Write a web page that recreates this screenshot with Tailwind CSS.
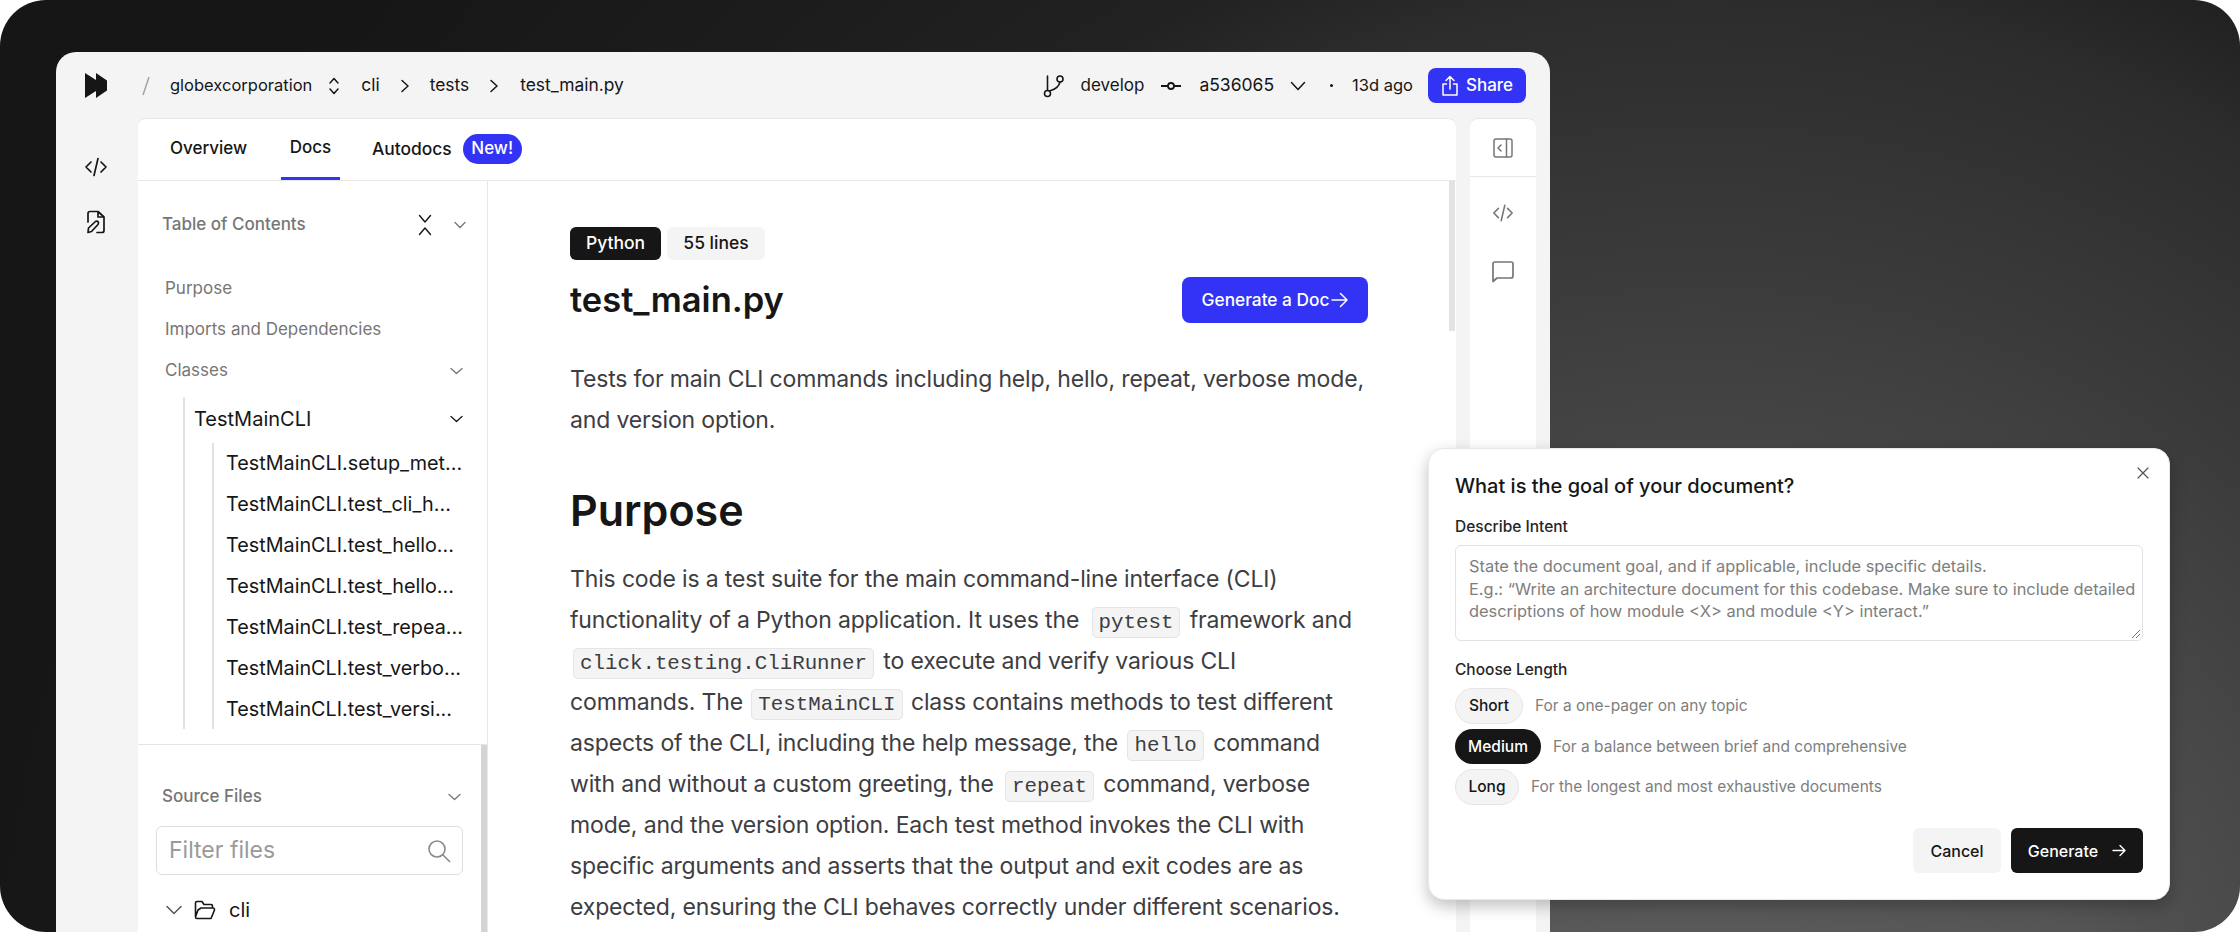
<!DOCTYPE html>
<html lang="en">
<head>
<meta charset="utf-8">
<title>Docs</title>
<script src="https://cdn.jsdelivr.net/npm/@tailwindcss/browser@4"></script>
</head>
<body class="bg-white font-['Inter',sans-serif] text-[#161616]">
<div class="relative w-[2240px] h-[932px] overflow-hidden rounded-[46px] bg-[radial-gradient(circle_at_1700px_1100px,#5c5c5c_0px,#555555_400px,#3c3c3c_810px,#2c2c2c_1100px,#222222_1200px,#1c1c1c_1420px,#161616_1750px)] pt-[52px] pl-[56px]">

  <!-- App window -->
  <div class="w-[1494px] h-[900px] rounded-t-[20px] bg-[#f4f4f4] flex flex-col overflow-hidden">
    <!-- Top bar -->
    <header class="h-[66px] shrink-0 flex items-center text-[17px] pl-[29px] pr-[24px] pt-[1px]">
      <svg class="w-[22px] h-[25px]" viewBox="0 0 22 25" fill="#161616"><path d="M0 0 11 7V0L22 7.500V17.500L11 25V18L0 25Z"/></svg>
      <svg class="ml-[34px] w-[10px] h-[20px]" viewBox="0 0 10 20" fill="none" stroke="#a3a3a3" stroke-width="1.500"><path d="M8 1 2 19"/></svg>
      <span class="ml-[19px] text-[16.500px]">globexcorporation</span>
      <svg class="ml-[16px] w-[12px] h-[20px]" viewBox="0 0 12 20" fill="none" stroke="#161616" stroke-width="1.500" stroke-linecap="round" stroke-linejoin="round"><path d="M2 7 6 2.500 10 7M2 13 6 17.500 10 13"/></svg>
      <span class="ml-[21px] text-[17.400px]">cli</span>
      <svg class="ml-[20px] w-[10px] h-[16px]" viewBox="0 0 10 16" fill="none" stroke="#161616" stroke-width="1.500" stroke-linecap="round" stroke-linejoin="round"><path d="M2 2.500 8 8 2 13.500"/></svg>
      <span class="ml-[20px] text-[17.400px]">tests</span>
      <svg class="ml-[20px] w-[10px] h-[16px]" viewBox="0 0 10 16" fill="none" stroke="#161616" stroke-width="1.500" stroke-linecap="round" stroke-linejoin="round"><path d="M2 2.500 8 8 2 13.500"/></svg>
      <span class="ml-[21px] text-[17.400px]">test_main.py</span>

      <div class="ml-auto flex items-center">
        <svg class="w-[22px] h-[24px]" viewBox="0 0 22 24" fill="none" stroke="#161616" stroke-width="1.600" stroke-linecap="round"><circle cx="4.500" cy="19.500" r="3"/><circle cx="17" cy="5" r="3"/><path d="M4.500 16.500V2M6.500 17C12 15.500 16 13 17 8"/></svg>
        <span class="ml-[16px]">develop</span>
        <svg class="ml-[17px] w-[20px] h-[12px]" viewBox="0 0 20 12" fill="none" stroke="#161616" stroke-width="1.800"><circle cx="10" cy="6" r="3"/><path d="M0 6H7M13 6H20"/></svg>
        <span class="ml-[18px] text-[17.500px]">a536065</span>
        <svg class="ml-[16px] w-[16px] h-[10px]" viewBox="0 0 16 10" fill="none" stroke="#161616" stroke-width="1.500" stroke-linecap="round" stroke-linejoin="round"><path d="M1.500 1.500 8 8.500 14.500 1.500"/></svg>
        <span class="ml-[24px] w-[3px] h-[3px] bg-[#161616] rounded-full"></span>
        <span class="ml-[19px] text-[16.500px]">13d ago</span>
        <button class="ml-[15px] w-[98px] h-[35px] rounded-[8px] bg-[#3333f5] text-white font-medium flex items-center justify-center gap-[7px]">
          <svg class="w-[18px] h-[22px]" viewBox="0 0 18 22" fill="none" stroke="#fff" stroke-width="1.500" stroke-linecap="round" stroke-linejoin="round"><path d="M9 14V2M5 5.500 9 1.500 13 5.500M5.500 9H2V20H16V9H12.500"/></svg>
          Share
        </button>
      </div>
    </header>

    <div class="flex flex-1 min-h-0">
      <!-- Left rail -->
      <nav class="w-[82px] shrink-0 flex flex-col items-center pt-[37px] gap-[31px] pr-[2px]">
        <svg class="w-[24px] h-[24px]" viewBox="0 0 24 24" fill="none" stroke="#161616" stroke-width="1.700" stroke-linecap="round" stroke-linejoin="round"><path d="M7 7 2 12 7 17M17 7 22 12 17 17M14 3.500 10 20.500"/></svg>
        <svg class="w-[22px] h-[24px]" viewBox="0 0 22 24" fill="none" stroke="#161616" stroke-width="1.700" stroke-linecap="round" stroke-linejoin="round"><path d="M3 12V3.500Q3 1.500 5 1.500H13L19 7V20.500Q19 22.500 17 22.500H12M13 1.500V7H19M3 22.500 3.500 18 10.500 11.500Q12 10.500 13.200 11.800 14 13 13 14.500L6.500 21.500Z"/></svg>
      </nav>

      <!-- Main panel -->
      <main class="w-[1318px] shrink-0 bg-white rounded-t-[8px] border-t border-[#e5e5e5] flex flex-col overflow-hidden">
        <!-- Tabs -->
        <div class="h-[62px] shrink-0 border-b border-[#e8e8e8] flex items-stretch pl-[22px] text-[17px] font-medium">
          <div class="w-[90px] pl-[10px] pb-[1px] flex items-center">Overview</div>
          <div class="ml-[31px] w-[59px] flex items-center justify-center border-b-[3px] border-[#3333f5]">Docs</div>
          <div class="ml-[32px] pb-[1px] flex items-center text-[17.400px]">Autodocs</div>
          <div class="flex items-center pb-[2px] ml-[11px]"><span class="w-[59px] h-[30px] rounded-full bg-[#3333f5] text-white flex items-center justify-center">New!</span></div>
        </div>

        <div class="flex flex-1 min-h-0">
          <!-- Sidebar -->
          <aside class="w-[350px] shrink-0 border-r border-[#e8e8e8] flex flex-col">
            <div class="h-[564px] shrink-0 pl-[24px] pr-[21px] border-b border-[#e5e5e5]">
              <div class="h-[86px] flex items-center justify-between pt-[2px]">
                <span class="font-medium text-[#767676] text-[17px]">Table of Contents</span>
                <div class="flex items-center gap-[22px]">
                  <svg class="w-[14px] h-[22px]" viewBox="0 0 14 22" fill="none" stroke="#161616" stroke-width="1.400" stroke-linecap="round" stroke-linejoin="round"><path d="M1.500 1.500 7 8 12.500 1.500M1.500 20.500 7 14 12.500 20.500"/></svg>
                  <svg class="w-[12px] h-[8px]" viewBox="0 0 12 8" fill="none" stroke="#767676" stroke-width="1.300" stroke-linecap="round" stroke-linejoin="round"><path d="M1 1.500 6 6.500 11 1.500"/></svg>
                </div>
              </div>
              <div class="text-[17px] text-[#767676] pl-[3px] pr-[3px] pt-[1px]">
                <div class="h-[41px] flex items-center">Purpose</div>
                <div class="h-[41px] flex items-center">Imports and Dependencies</div>
                <div class="h-[41px] flex items-center justify-between">Classes
                  <svg class="w-[13px] h-[8px]" viewBox="0 0 13 8" fill="none" stroke="#767676" stroke-width="1.300" stroke-linecap="round" stroke-linejoin="round"><path d="M1 1.500 6.500 6.500 12 1.500"/></svg>
                </div>
              </div>
              <div class="ml-[21px] border-l-2 border-[#dfe1e6] text-[20px] h-[332px] mt-[6px]">
                <div class="h-[46px] flex items-center justify-between pl-[9px] pr-[3px] pb-[2px]">TestMainCLI
                  <svg class="w-[13px] h-[8px]" viewBox="0 0 13 8" fill="none" stroke="#161616" stroke-width="1.300" stroke-linecap="round" stroke-linejoin="round"><path d="M1 1.500 6.500 6.500 12 1.500"/></svg>
                </div>
                <div class="ml-[27px] border-l-2 border-[#dfe1e6] h-[286px] pl-[12px]">
                  <div class="h-[41px] flex items-center whitespace-nowrap text-[19.800px]">TestMainCLI.setup_met...</div>
                  <div class="h-[41px] flex items-center whitespace-nowrap text-[19.800px]">TestMainCLI.test_cli_h...</div>
                  <div class="h-[41px] flex items-center whitespace-nowrap text-[19.800px]">TestMainCLI.test_hello...</div>
                  <div class="h-[41px] flex items-center whitespace-nowrap text-[19.800px]">TestMainCLI.test_hello...</div>
                  <div class="h-[41px] flex items-center whitespace-nowrap text-[19.800px]">TestMainCLI.test_repea...</div>
                  <div class="h-[41px] flex items-center whitespace-nowrap text-[19.800px]">TestMainCLI.test_verbo...</div>
                  <div class="h-[41px] flex items-center whitespace-nowrap text-[19.800px]">TestMainCLI.test_versi...</div>
                </div>
              </div>
            </div>
            <div class="relative flex-1 pl-[18px] pr-[24px]">
              <div class="absolute right-0 top-0 bottom-0 w-[6px] bg-[#d4d4d4]"></div>
              <div class="h-[81px] flex items-center justify-between pl-[6px] pr-[2px] font-medium text-[17px] text-[#767676] pt-[22px]">Source Files
                <svg class="w-[13px] h-[8px]" viewBox="0 0 13 8" fill="none" stroke="#767676" stroke-width="1.300" stroke-linecap="round" stroke-linejoin="round"><path d="M1 1.500 6.500 6.500 12 1.500"/></svg>
              </div>
              <div class="h-[49px] w-[307px] rounded-[6px] border border-[#dedede] flex items-center justify-between pl-[12px] pr-[10px] text-[23px] text-[#9a9a9a]">Filter files
                <svg class="w-[26px] h-[26px]" viewBox="0 0 26 26" fill="none" stroke="#8a8a8a" stroke-width="1.600" stroke-linecap="round"><circle cx="11" cy="11" r="8"/><path d="M17 17 23.500 23.500"/></svg>
              </div>
              <div class="flex items-center pl-[10px] h-[50px] text-[20px] mt-[10px]">
                <svg class="w-[16px] h-[10px]" viewBox="0 0 16 10" fill="none" stroke="#555" stroke-width="1.500" stroke-linecap="round" stroke-linejoin="round"><path d="M1 1.500 8 8.500 15 1.500"/></svg>
                <svg class="ml-[12px] w-[22px] h-[20px]" viewBox="0 0 22 20" fill="none" stroke="#161616" stroke-width="1.600" stroke-linejoin="round"><path d="M1.500 17V3Q1.500 1.500 3 1.500H8L10 4.500H17Q18.500 4.500 18.500 6V8M1.500 17Q1.500 18.500 3 18.500H17L20.500 10Q20.500 8 19 8H7L4 10 1.500 17Z"/></svg>
                <span class="ml-[13px]">cli</span>
              </div>
            </div>
          </aside>

          <!-- Document -->
          <section class="relative flex-1 pl-[82px] pt-[46px]">
            <div class="absolute right-[1px] top-0 h-[150px] w-[6px] bg-[#e3e3e3]"></div>
            <div class="flex gap-[6px] text-[17.500px] font-medium">
              <span class="w-[91px] h-[33px] rounded-[6px] bg-[#161616] text-white flex items-center justify-center">Python</span>
              <span class="w-[98px] h-[33px] rounded-[6px] bg-[#f4f4f4] flex items-center justify-center">55 lines</span>
            </div>
            <div class="w-[798px] flex items-center justify-between mt-[17px] h-[46px]">
              <h1 class="text-[34.500px] font-semibold">test_main.py</h1>
              <button class="w-[186px] h-[46px] rounded-[8px] bg-[#3333f5] text-white font-medium text-[17.300px] flex items-center justify-center gap-[2px]">Generate a Doc
                <svg class="w-[17px] h-[16px]" viewBox="0 0 17 16" fill="none" stroke="#fff" stroke-width="1.500" stroke-linecap="round" stroke-linejoin="round"><path d="M1 8H16M9.500 1.500 16 8 9.500 14.500"/></svg>
              </button>
            </div>
            <p class="mt-[36px] text-[23px] tracking-[-0.15px] leading-[41px] text-[#3d3d42] whitespace-nowrap">Tests for main CLI commands including help, hello, repeat, verbose mode,<br>and version option.</p>
            <h2 class="mt-[42px] text-[43px] leading-[54px] font-semibold">Purpose</h2>
            <p class="mt-[22px] text-[23px] tracking-[-0.15px] leading-[41px] text-[#3d3d42] whitespace-nowrap">This code is a test suite for the main command-line interface (CLI)<br>functionality of a Python application. It uses the <code class="font-['Liberation_Mono',monospace] text-[20.800px] tracking-normal leading-none bg-[#f4f4f4] border border-[#e5e5e5] rounded-[5px] px-[6px] py-[3px] ml-[6px] mr-[3px]">pytest</code> framework and<br><code class="font-['Liberation_Mono',monospace] text-[20.800px] tracking-normal leading-none bg-[#f4f4f4] border border-[#e5e5e5] rounded-[5px] px-[6px] py-[3px] mx-[3px]">click.testing.CliRunner</code> to execute and verify various CLI<br>commands. The <code class="font-['Liberation_Mono',monospace] text-[20.800px] tracking-normal leading-none bg-[#f4f4f4] border border-[#e5e5e5] rounded-[5px] px-[6px] py-[3px] mx-[2px]">TestMainCLI</code> class contains methods to test different<br>aspects of the CLI, including the help message, the <code class="font-['Liberation_Mono',monospace] text-[20.800px] tracking-normal leading-none bg-[#f4f4f4] border border-[#e5e5e5] rounded-[5px] px-[6px] py-[3px] mx-[3px]">hello</code> command<br>with and without a custom greeting, the <code class="font-['Liberation_Mono',monospace] text-[20.800px] tracking-normal leading-none bg-[#f4f4f4] border border-[#e5e5e5] rounded-[5px] px-[6px] py-[3px] ml-[5px] mr-[3px]">repeat</code> command, verbose<br>mode, and the version option. Each test method invokes the CLI with<br>specific arguments and asserts that the output and exit codes are as<br>expected, ensuring the CLI behaves correctly under different scenarios.</p>
          </section>
        </div>
      </main>

      <!-- Right rail -->
      <aside class="ml-[14px] w-[66px] shrink-0 bg-white rounded-t-[8px] border-t border-[#e5e5e5] flex flex-col items-center">
        <div class="w-full h-[58px] border-b border-[#e8e8e8] flex items-center justify-center">
          <svg class="w-[20px] h-[20px]" viewBox="0 0 20 20" fill="none" stroke="#767676" stroke-width="1.500" stroke-linecap="round" stroke-linejoin="round"><rect x="1" y="1" width="18" height="18" rx="2"/><path d="M13.500 1V19M8 7 5 10 8 13"/></svg>
        </div>
        <svg class="mt-[25px] w-[22px] h-[22px]" viewBox="0 0 24 24" fill="none" stroke="#767676" stroke-width="1.700" stroke-linecap="round" stroke-linejoin="round"><path d="M7 7 2 12 7 17M17 7 22 12 17 17M14 3.500 10 20.500"/></svg>
        <svg class="mt-[37px] w-[22px] h-[22px]" viewBox="0 0 22 22" fill="none" stroke="#767676" stroke-width="1.700" stroke-linejoin="round"><path d="M1 20.500V3Q1 1 3 1H19Q21 1 21 3V15Q21 17 19 17H5Z"/></svg>
      </aside>
    </div>
  </div>

  <!-- Dialog -->
  <div class="absolute left-[1428px] top-[448px] w-[742px] h-[452px] bg-white rounded-[16px] border border-[#e8e8e8] shadow-[0_6px_16px_rgba(0,0,0,0.25)] pl-[26px] pr-[26px] pt-[23px]">
    <svg class="absolute right-[20px] top-[18px] w-[12px] h-[12px]" viewBox="0 0 12 12" fill="none" stroke="#555" stroke-width="1.200" stroke-linecap="round"><path d="M1 1 11 11M11 1 1 11"/></svg>
    <h3 class="text-[20px] leading-[28px] font-medium">What is the goal of your document?</h3>
    <div class="mt-[15px] text-[15.500px] leading-[24px] font-medium text-[#262626]">Describe Intent</div>
    <div class="relative mt-[6px] w-[688px] h-[96px] rounded-[6px] border border-[#e2e2e2] pl-[13px] pt-[9px] text-[16.400px] leading-[22.700px] text-[#7e7e7e] whitespace-nowrap">State the document goal, and if applicable, include specific details.<br>E.g.: “Write an architecture document for this codebase. Make sure to include detailed<br>descriptions of how module &lt;X&gt; and module &lt;Y&gt; interact.”
      <svg class="absolute right-[1px] bottom-[1px] w-[10px] h-[10px]" viewBox="0 0 10 10" fill="none" stroke="#777" stroke-width="1"><path d="M1 9 9 1M5 9 9 5"/></svg>
    </div>
    <div class="mt-[17px] text-[15.500px] leading-[24px] font-medium text-[#262626]">Choose Length</div>
    <div class="mt-[6px] flex items-center gap-[12px] text-[15.500px] text-[#7e7e7e]">
      <span class="w-[68px] h-[36px] rounded-full bg-[#f4f4f4] border border-[#e5e5e5] text-[#161616] font-medium flex items-center justify-center">Short</span>For a one-pager on any topic
    </div>
    <div class="mt-[5px] flex items-center gap-[12px] text-[15.500px] text-[#7e7e7e]">
      <span class="w-[86px] h-[35px] rounded-full bg-[#161616] text-white font-medium flex items-center justify-center">Medium</span>For a balance between brief and comprehensive
    </div>
    <div class="mt-[5px] flex items-center gap-[12px] text-[15.500px] text-[#7e7e7e]">
      <span class="w-[64px] h-[36px] rounded-full bg-[#f4f4f4] border border-[#e5e5e5] text-[#161616] font-medium flex items-center justify-center">Long</span>For the longest and most exhaustive documents
    </div>
    <div class="mt-[23px] flex justify-end gap-[10px] text-[16px] font-medium">
      <button class="w-[88px] h-[45px] rounded-[6px] bg-[#f4f4f4]">Cancel</button>
      <button class="w-[132px] h-[45px] rounded-[6px] bg-[#161616] text-white flex items-center justify-center gap-[14px]">Generate
        <svg class="w-[14px] h-[13px]" viewBox="0 0 14 13" fill="none" stroke="#fff" stroke-width="1.400" stroke-linecap="round" stroke-linejoin="round"><path d="M1 6.500H13M8 1.500 13 6.500 8 11.500"/></svg>
      </button>
    </div>
  </div>
</div>
</body>
</html>
